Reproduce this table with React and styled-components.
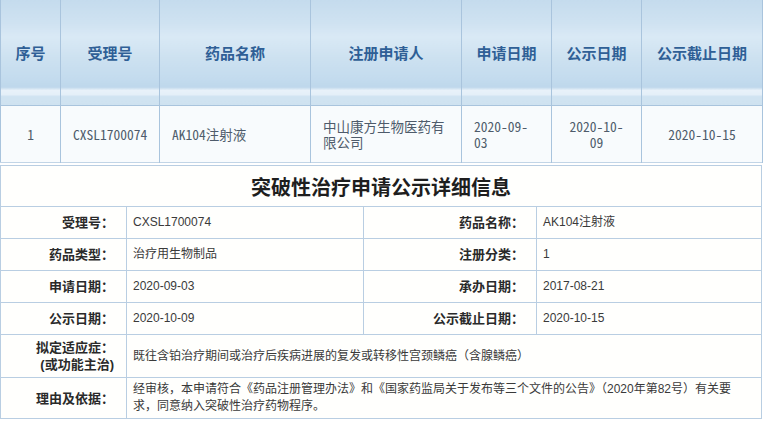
import React from 'react';
import styled, { createGlobalStyle } from 'styled-components';

const GlobalStyle = createGlobalStyle`
  html, body {
    margin: 0;
    padding: 0;
    background: #ffffff;
  }
  body {
    font-family: "Liberation Sans", "Noto Sans CJK SC", sans-serif;
    color: #333;
  }
`;

const listColumns = [
  { key: 'no', title: '序号', width: 60, align: 'center' },
  { key: 'acceptNo', title: '受理号', width: 99, align: 'center', nowrap: true },
  { key: 'drug', title: '药品名称', width: 151, align: 'left' },
  { key: 'applicant', title: '注册申请人', width: 151, align: 'left' },
  { key: 'applyDate', title: '申请日期', width: 90, align: 'left' },
  { key: 'publicDate', title: '公示日期', width: 90, align: 'center' },
  { key: 'endDate', title: '公示截止日期', width: 121, align: 'center' },
];

const listRow = {
  no: '1',
  acceptNo: 'CXSL1700074',
  drug: 'AK104注射液',
  applicant: '中山康方生物医药有限公司',
  applyDate: '2020-09-03',
  publicDate: '2020-10-09',
  endDate: '2020-10-15',
};

const detailPairs = [
  ['受理号：', 'CXSL1700074', '药品名称：', 'AK104注射液'],
  ['药品类型：', '治疗用生物制品', '注册分类：', '1'],
  ['申请日期：', '2020-09-03', '承办日期：', '2017-08-21'],
  ['公示日期：', '2020-10-09', '公示截止日期：', '2020-10-15'],
];

export default function App() {
  return (
    <>
      <GlobalStyle />
      <Page>
        <ListTable>
          <colgroup>
            {listColumns.map((c) => (
              <col key={c.key} style={{ width: c.width }} />
            ))}
          </colgroup>
          <thead>
            <tr>
              {listColumns.map((c) => (
                <HeadCell key={c.key}>{c.title}</HeadCell>
              ))}
            </tr>
          </thead>
          <tbody>
            <tr>
              {listColumns.map((c) => (
                <DataCell key={c.key} $align={c.align} $nowrap={c.nowrap}>
                  {listRow[c.key]}
                </DataCell>
              ))}
            </tr>
          </tbody>
        </ListTable>

        <DetailTable>
          <colgroup>
            <col style={{ width: 126 }} />
            <col style={{ width: 237 }} />
            <col style={{ width: 173 }} />
            <col style={{ width: 225 }} />
          </colgroup>
          <tbody>
            <tr>
              <TitleCell colSpan={4}>突破性治疗申请公示详细信息</TitleCell>
            </tr>
            {detailPairs.map((p) => (
              <tr key={p[0]}>
                <LabelCell>{p[0]}</LabelCell>
                <ValueCell>{p[1]}</ValueCell>
                <LabelCell>{p[2]}</LabelCell>
                <ValueCell>{p[3]}</ValueCell>
              </tr>
            ))}
            <TallRow $height={43}>
              <LabelCell>
                拟定适应症：
                <br />
                (或功能主治)
              </LabelCell>
              <ValueCell colSpan={3}>既往含铂治疗期间或治疗后疾病进展的复发或转移性宫颈鳞癌（含腺鳞癌）</ValueCell>
            </TallRow>
            <TallRow $height={41}>
              <LabelCell>理由及依据：</LabelCell>
              <ValueCell colSpan={3}>
                经审核，本申请符合《药品注册管理办法》和《国家药监局关于发布等三个文件的公告》（2020年第82号）有关要求，同意纳入突破性治疗药物程序。
              </ValueCell>
            </TallRow>
          </tbody>
        </DetailTable>
      </Page>
    </>
  );
}

const Page = styled.div`
  width: 764px;
  display: flex;
  flex-direction: column;
  gap: 2px;
`;

const ListTable = styled.table`
  width: 762px;
  table-layout: fixed;
  border-collapse: collapse;
  border-left: 1px solid #a9c4dd;
  border-right: 1px solid #a9c4dd;
  border-bottom: 1px solid #c2d5e6;
`;

const HeadCell = styled.th`
  height: 105px;
  padding: 0;
  border-right: 1px solid #a9c4dd;
  border-bottom: 1px solid #a9c4dd;
  background: linear-gradient(
    to bottom,
    #c4dbed 0%,
    #cfe2f1 22%,
    #d9e9f5 35%,
    #cde1f0 55%,
    #c3dbee 75%,
    #bed7eb 83%,
    #e8f1f9 86%,
    #e4eff8 90%,
    #d0e3f1 92%,
    #cfe2f0 100%
  );
  color: #2f5f96;
  font-family: "Noto Sans CJK SC", "Liberation Sans", sans-serif;
  font-size: 15px;
  font-weight: 700;
  text-align: center;
  vertical-align: middle;
`;

const DataCell = styled.td`
  height: 56px;
  padding: 0 12px;
  border-right: 1px solid #a9c4dd;
  background: #f8fbfd;
  color: #4e5b6b;
  font-family: "Noto Sans Mono CJK SC", "Noto Sans CJK SC", monospace;
  font-size: 13.5px;
  line-height: 16px;
  text-align: ${(p) => p.$align};
  vertical-align: middle;
  white-space: ${(p) => (p.$nowrap ? 'nowrap' : 'normal')};
  word-break: break-word;
`;

const DetailTable = styled.table`
  width: 762px;
  table-layout: fixed;
  border-collapse: collapse;
  border: 1px solid #b9cee2;
  background: #fffffd;
`;

const TitleCell = styled.td`
  height: 40px;
  padding: 0;
  border-bottom: 1px solid #b9cee2;
  text-align: center;
  vertical-align: middle;
  color: #1e1e1e;
  font-family: "Noto Sans CJK SC", "Liberation Sans", sans-serif;
  font-size: 20px;
  font-weight: 700;
`;

const LabelCell = styled.td`
  height: 31px;
  padding: 0 12px 0 4px;
  border: 1px solid #b9cee2;
  text-align: right;
  vertical-align: middle;
  color: #2a2a2a;
  font-family: "Liberation Sans", "Noto Sans CJK SC", sans-serif;
  font-size: 13px;
  font-weight: 700;
  line-height: 17px;
`;

const ValueCell = styled.td`
  height: 31px;
  padding: 0 6px;
  border: 1px solid #b9cee2;
  text-align: left;
  vertical-align: middle;
  color: #3a3a3a;
  font-family: "Liberation Sans", "Noto Sans CJK SC", sans-serif;
  font-size: 12px;
  line-height: 17px;
`;

const TallRow = styled.tr`
  height: ${(p) => p.$height}px;
`;
